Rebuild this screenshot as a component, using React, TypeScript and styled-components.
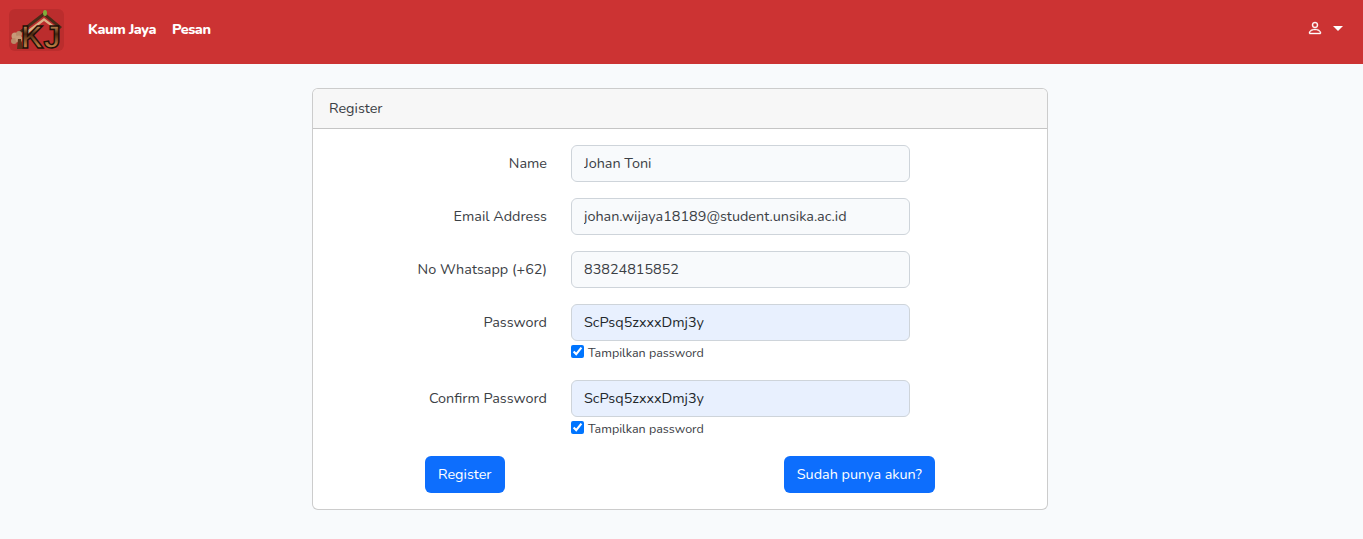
import React from 'react'
import styled, { createGlobalStyle } from 'styled-components'

const Global = createGlobalStyle`
  * { box-sizing: border-box; }
  body {
    margin: 0;
    background: #f8fafc;
    font-family: Nunito, "Open Sans", "Noto Sans", sans-serif;
    font-size: 14.4px;
    color: #3b4045;
    overflow: hidden;
  }
`

const Navbar = styled.nav`
  height: 64px;
  background: #cc3333;
  display: flex;
  align-items: center;
  justify-content: space-between;
  padding: 0 20px 6px 9px;
`
const Brand = styled.div`
  display: flex;
  align-items: center;
`
const NavLink = styled.a`
  color: #fff;
  font-weight: 800;
  font-size: 14.4px;
  letter-spacing: -0.45px;
  margin-left: 16px;
`
const Logo = styled.svg`
  width: 55px;
  height: 52px;
  margin: 12px 8px 0 0;
`
const UserMenu = styled.div`
  display: flex;
  align-items: center;
  gap: 10px;
  padding-bottom: 2px;
  color: #fff;
`
const Caret = styled.span`
  width: 0;
  height: 0;
  border-top: 5px solid #fff;
  border-left: 5px solid transparent;
  border-right: 5px solid transparent;
`
const Main = styled.main`
  display: flex;
  justify-content: center;
  padding: 24px 3px 0 0;
`
const Card = styled.section`
  width: 736px;
  background: #fff;
  border: 1px solid rgba(0, 0, 0, 0.2);
  border-radius: 6px;
  overflow: hidden;
`
const CardHeader = styled.header`
  height: 40px;
  padding: 0 16px 2px;
  display: flex;
  align-items: center;
  background: #f7f7f7;
  border-bottom: 1px solid rgba(0, 0, 0, 0.2);
`
const Form = styled.form`
  padding: 16px;
`
const Row = styled.div<{ $gap: number }>`
  display: grid;
  grid-template-columns: 218px 339px;
  column-gap: 24px;
  margin-bottom: ${p => p.$gap}px;
`
const Label = styled.label`
  text-align: right;
  line-height: 37px;
`
const Input = styled.input<{ $autofill?: boolean }>`
  display: block;
  width: 100%;
  height: 37px;
  padding: 0 12px 2px;
  border: 1px solid #ced4da;
  border-radius: 6px;
  font: inherit;
  color: ${p => (p.$autofill ? '#22272b' : '#3b4045')};
  background: ${p => (p.$autofill ? '#e8f0fe' : '#f8fafc')};
`
const CheckRow = styled.label`
  display: flex;
  align-items: center;
  gap: 4px;
  height: 24px;
  padding-bottom: 2px;
  font-size: 12.5px;
`
const Check = styled.input`
  width: 13px;
  height: 13px;
  margin: 0 0 2px;
  accent-color: #0075ff;
`
const Actions = styled.div`
  display: flex;
  justify-content: space-between;
  padding: 0 96px;
`
const Button = styled.button`
  height: 37px;
  padding: 0 13px 2px;
  border: none;
  border-radius: 6px;
  background: #0d6efd;
  color: #fff;
  font: inherit;
`

const fields = [
  { label: 'Name', value: 'Johan Toni', gap: 16 },
  { label: 'Email Address', value: 'johan.wijaya18189@student.unsika.ac.id', gap: 16 },
  { label: 'No Whatsapp (+62)', value: '83824815852', gap: 16 },
  { label: 'Password', value: 'ScPsq5zxxxDmj3y', gap: 15, secret: true },
  { label: 'Confirm Password', value: 'ScPsq5zxxxDmj3y', gap: 15, secret: true },
]

export default function App() {
  return (
    <>
      <Global />
      <Navbar>
        <Brand>
          <Logo viewBox="0 0 55 52">
            <defs>
              <linearGradient id="kj" x1="0" y1="0" x2="0" y2="1">
                <stop offset="0.1" stopColor="#e3a86a" />
                <stop offset="0.4" stopColor="#4a2610" />
                <stop offset="0.72" stopColor="#b87a42" />
              </linearGradient>
            </defs>
            <rect width="55" height="42" rx="6" fill="#bb2d2d" />
            <path d="M9 23 L35 3 L53 18 L51 20 L35 7 L11 25 Z" fill="#4a2a18" />
            <path d="M15 24 L35 9 L48 19 L47 21 L35 12 L17 26 Z" fill="#d9ad85" />
            <ellipse cx="36" cy="4" rx="2" ry="3" fill="#7fae3c" />
            <circle cx="6" cy="27" r="3.5" fill="#c79a78" />
            <circle cx="10" cy="25" r="3" fill="#b98a68" />
            <circle cx="5" cy="32" r="3" fill="#b98a68" />
            <circle cx="10" cy="30" r="3.5" fill="#c79a78" />
            <path d="M9 30 L12 30 L14 40 L8 40 Z" fill="#5a3018" />
            <text x="12" y="39" fontFamily="Liberation Sans, sans-serif" fontWeight="700" fontSize="31" fill="url(#kj)" stroke="#1f0f06" strokeWidth="1.4">KJ</text>
          </Logo>
          <NavLink>Kaum Jaya</NavLink>
          <NavLink>Pesan</NavLink>
        </Brand>
        <UserMenu>
          <svg width="16" height="16" viewBox="0 0 16 16" fill="#fff" stroke="#fff" strokeWidth="0.4">
            <path d="M8 8a3 3 0 1 0 0-6 3 3 0 0 0 0 6Zm2-3a2 2 0 1 1-4 0 2 2 0 0 1 4 0Zm4 8c0 1-1 1-1 1H3s-1 0-1-1 1-4 6-4 6 3 6 4Zm-1-.004c-.001-.246-.154-.986-.832-1.664C11.516 10.68 10.289 10 8 10c-2.29 0-3.516.68-4.168 1.332-.678.678-.83 1.418-.832 1.664h10Z" />
          </svg>
          <Caret />
        </UserMenu>
      </Navbar>
      <Main>
        <Card>
          <CardHeader>Register</CardHeader>
          <Form>
            {fields.map(f => (
              <Row key={f.label} $gap={f.gap}>
                <Label>{f.label}</Label>
                <div>
                  <Input defaultValue={f.value} $autofill={f.secret} />
                  {f.secret && (
                    <CheckRow>
                      <Check type="checkbox" defaultChecked />
                      Tampilkan password
                    </CheckRow>
                  )}
                </div>
              </Row>
            ))}
            <Actions>
              <Button type="button">Register</Button>
              <Button type="button">Sudah punya akun?</Button>
            </Actions>
          </Form>
        </Card>
      </Main>
    </>
  )
}
